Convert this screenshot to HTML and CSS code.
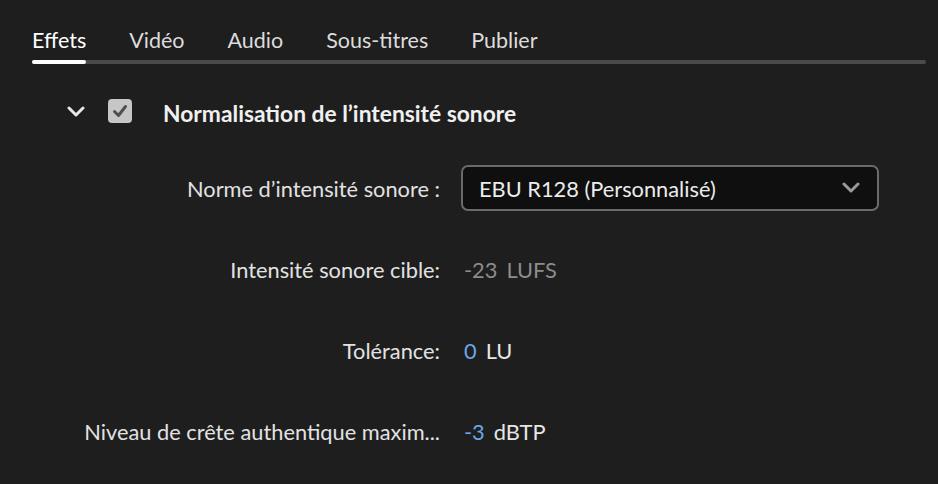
FILE: index.html
```html
<!DOCTYPE html>
<html lang="fr">
<head>
<meta charset="utf-8">
<link rel="stylesheet" href="styles.css">
</head>
<body>
<div class="panel">
  <nav class="tabbar">
    <div class="tab active">Effets</div>
    <div class="tab">Vidéo</div>
    <div class="tab">Audio</div>
    <div class="tab">Sous-titres</div>
    <div class="tab">Publier</div>
  </nav>

  <div class="section-head">
    <svg class="disclosure" width="20" height="12" viewBox="0 0 20 12"><path d="M3 2 L10 9 L17 2" fill="none" stroke="#e8e8e8" stroke-width="3" stroke-linecap="round" stroke-linejoin="round"/></svg>
    <span class="checkbox"><svg width="24" height="24" viewBox="0 0 24 24"><path d="M6.5 12.5 L10.5 16.5 L17.5 7.5" fill="none" stroke="#505050" stroke-width="3" stroke-linecap="round" stroke-linejoin="round"/></svg></span>
    <h2 class="section-title">Normalisation de l’intensité sonore</h2>
  </div>

  <div class="form">
    <div class="label">Norme d’intensité sonore :</div>
    <div class="value">
      <div class="select">
        <span>EBU R128 (Personnalisé)</span>
        <svg width="20" height="12" viewBox="0 0 20 12"><path d="M3 2 L10 9 L17 2" fill="none" stroke="#9a9a9a" stroke-width="3" stroke-linecap="round" stroke-linejoin="round"/></svg>
      </div>
    </div>

    <div class="label">Intensité sonore cible:</div>
    <div class="value"><span class="num dim">-23</span><span class="unit dim">LUFS</span></div>

    <div class="label">Tolérance:</div>
    <div class="value"><span class="num blue">0</span><span class="unit">LU</span></div>

    <div class="label">Niveau de crête authentique maxim...</div>
    <div class="value"><span class="num blue">-3</span><span class="unit">dBTP</span></div>
  </div>
</div>
</body>
</html>
```

FILE: styles.css
```css
html, body {
  margin: 0;
  background: #1e1e1e;
}
body {
  font-family: Lato, "Open Sans", sans-serif;
  color: #e6e6e6;
  width: 938px;
  height: 484px;
  overflow: hidden;
}
.panel {
  padding-top: 28px;
}
.tabbar {
  position: relative;
  display: flex;
  gap: 43px;
  margin: 0 12px 0 32px;
}
.tabbar::after {
  content: "";
  position: absolute;
  left: 0;
  right: 0;
  bottom: 0;
  height: 4px;
  border-radius: 2px;
  background: #4b4b4b;
}
.tab {
  position: relative;
  font-size: 21.5px;
  line-height: 24px;
  padding-bottom: 12px;
  color: #dcdcdc;
}
.tab.active {
  color: #ffffff;
}
.tab.active::after {
  content: "";
  position: absolute;
  left: 0;
  right: 0;
  bottom: 0;
  height: 4px;
  border-radius: 2px;
  background: #ffffff;
  z-index: 1;
}
.section-head {
  display: flex;
  align-items: center;
  height: 28px;
  margin-top: 33px;
  padding-left: 66px;
}
.disclosure {
  display: block;
  margin-top: 2px;
}
.checkbox {
  width: 24px;
  height: 24px;
  margin-left: 22px;
  border-radius: 4px;
  background: #c6c6c6;
  display: flex;
}
.section-title {
  margin: 3px 0 0 31px;
  font-size: 22.8px;
  font-weight: 700;
  color: #f0f0f0;
  white-space: nowrap;
}
.form {
  display: grid;
  grid-template-columns: 440px 418px;
  grid-auto-rows: 46px;
  column-gap: 21px;
  row-gap: 35px;
  margin-top: 40px;
}
.label {
  display: flex;
  align-items: center;
  justify-content: flex-end;
  font-size: 21.8px;
  color: #e2e2e2;
  white-space: nowrap;
}
.value {
  display: flex;
  align-items: center;
  font-size: 21.8px;
  padding-left: 3px;
}
.select {
  box-sizing: border-box;
  margin-left: -3px;
  width: 418px;
  height: 46px;
  border: 2px solid #6a6a6a;
  border-radius: 7px;
  background: #0f0f0f;
  display: flex;
  align-items: center;
  justify-content: space-between;
  padding: 0 16px 0 16px;
  color: #ececec;
}
.select svg {
  display: block;
}
.num {
  margin-right: 9px;
}
.dim {
  color: #8c8c8c;
}
.blue {
  color: #6aa8e8;
}
.unit {
  color: #e6e6e6;
}
.unit.dim {
  color: #8c8c8c;
}
```
